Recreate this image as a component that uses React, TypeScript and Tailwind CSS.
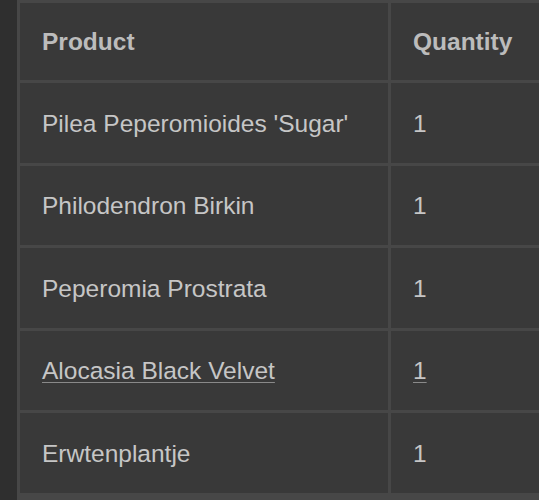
import React from 'react';

const rows = [
    { name: "Pilea Peperomioides 'Sugar'", qty: '1' },
    { name: 'Philodendron Birkin', qty: '1' },
    { name: 'Peperomia Prostrata', qty: '1' },
    { name: 'Alocasia Black Velvet', qty: '1', link: true },
    { name: 'Erwtenplantje', qty: '1' },
];

const cell = 'h-[79.5px] flex items-center pl-[22px] pt-[3px] bg-[#393939] text-[24.5px]';
const head = 'h-[77px] flex items-center pl-[22px] pt-[1px] bg-[#393939] text-[24.5px] font-bold text-[#bcbcbc]';

const App: React.FC = () => {
    return (
        <div className="w-[539px] h-[500px] overflow-hidden bg-[#2f2f2f] pl-[17px] font-['Liberation_Sans',Arial,sans-serif]">
            <div className="w-[560px] bg-[#474747] pt-[3px] pl-[3px] grid grid-cols-[368px_1fr] gap-[3px] pb-[20px]">
                {/* Header */}
                <div className={head}>Product</div>
                <div className={head}>Quantity</div>

                {/* Rows */}
                {rows.map((r) => (
                    <React.Fragment key={r.name}>
                        <div className={`${cell} text-[#c6c6c6]`}>
                            {r.link ? (
                                <span className="underline decoration-[#8a8a8a] decoration-1 underline-offset-[3px]">{r.name}</span>
                            ) : r.name}
                        </div>
                        <div className={`${cell} text-[#c6c6c6]`}>
                            {r.link ? (
                                <span className="underline decoration-[#8a8a8a] decoration-1 underline-offset-[3px]">{r.qty}</span>
                            ) : r.qty}
                        </div>
                    </React.Fragment>
                ))}
            </div>
        </div>
    );
};

export default App;
